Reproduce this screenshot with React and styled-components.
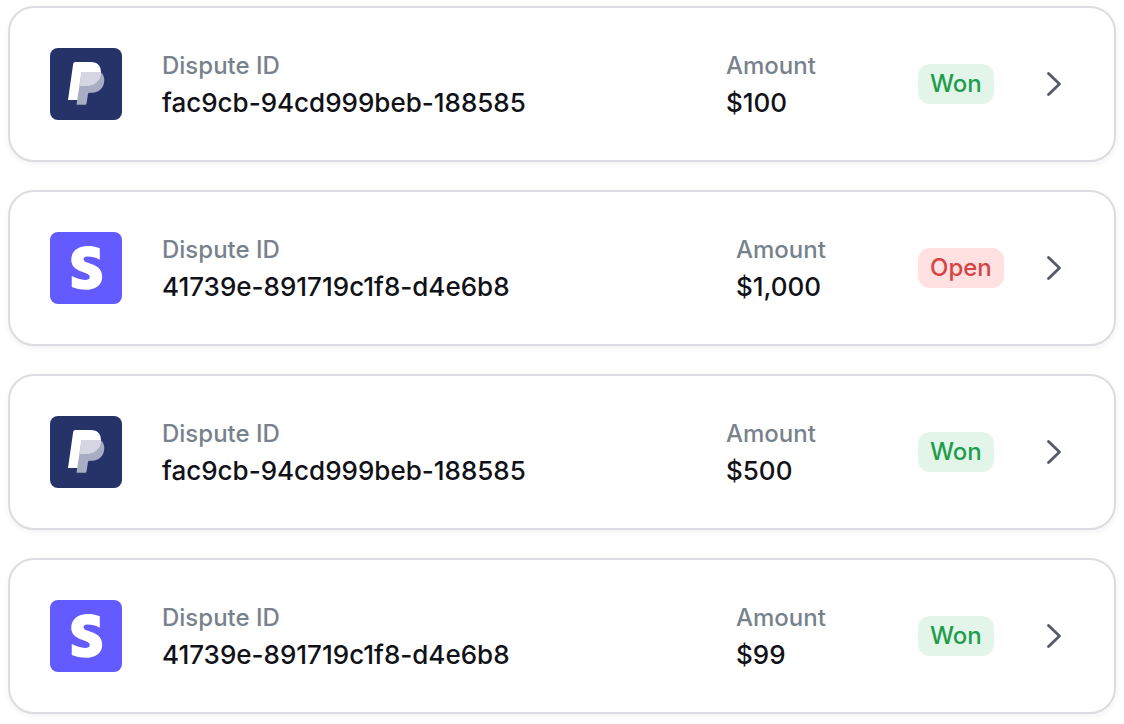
import styled, { createGlobalStyle } from 'styled-components';

const GlobalStyle = createGlobalStyle`
  * {
    box-sizing: border-box;
  }

  body {
    margin: 0;
    background-color: #ffffff;
    font-family: Inter, 'Liberation Sans', sans-serif;
  }
`;

const List = styled.ul`
  display: flex;
  flex-direction: column;
  gap: 28px;
  margin: 0;
  padding: 6px 8px 10px;
  list-style: none;
`;

const Card = styled.li`
  display: flex;
  align-items: center;
  padding: 38px 40px;
  background-color: #ffffff;
  border: 2px solid #dcdce2;
  border-radius: 26px;
  box-shadow: 0 2px 6px rgba(16, 24, 40, 0.06);
`;

const Logo = styled.svg`
  flex: none;
  width: 72px;
  height: 72px;
  margin-right: 40px;
  border-radius: 8px;
`;

const Field = styled.div`
  flex: 1;
  min-width: 0;
  padding-top: 2px;
`;

// Amount column is a little wider on PayPal rows
const AmountField = styled(Field)`
  flex: none;
  width: ${({ $wide }) => ($wide ? '192px' : '182px')};
`;

const Label = styled.div`
  color: #78828c;
  font-size: 24px;
  font-weight: 500;
  line-height: 36px;
`;

const Value = styled.div`
  color: #111217;
  font-size: 26px;
  font-weight: 500;
  line-height: 38px;
`;

const Status = styled.div`
  flex: none;
  width: 116px;
`;

const Badge = styled.span`
  display: inline-block;
  padding: 0 12px;
  border-radius: 12px;
  font-size: 24px;
  font-weight: 500;
  line-height: 40px;
  vertical-align: top;
  color: ${({ $open }) => ($open ? '#d64545' : '#1f9d4d')};
  background-color: ${({ $open }) => ($open ? '#ffe1e1' : '#e3f4e8')};
`;

const OpenButton = styled.button`
  display: flex;
  flex: none;
  padding: 0;
  border: none;
  background: none;
  cursor: pointer;
`;

const PayPalLogo = () => (
  <Logo viewBox="0 0 72 72" role="img" aria-label="PayPal">
    <rect width="72" height="72" fill="#253368" />
    <path
      fill="#ffffff"
      d="M25.2 14H41C47.5 14 51 17.8 51 24.5C51 33 44.5 38 36 38H32L28 52H18L23.2 15.7Q23.5 14 25.2 14Z"
    />
    <path
      fill="#a8adc3"
      d="M32.8 24H50.5C53 26 54.3 28.5 54.3 32C54.3 40 49 44.7 42 44.7H39.5Q38.3 44.7 38 46L36.5 55.5Q36.3 56.7 35 56.7H26.5L31.3 25.3Q31.5 24 32.8 24Z"
    />
    <path
      fill="#d4d6e1"
      d="M32.8 24H51V24.5C51 33 44.5 38 36 38H29.4L31.3 25.3Q31.5 24 32.8 24Z"
    />
  </Logo>
);

const StripeLogo = () => (
  <Logo viewBox="0 0 72 72" role="img" aria-label="Stripe">
    <rect width="72" height="72" fill="#635bff" />
    <path
      transform="translate(20.3 14) scale(0.0854)"
      fill="#ffffff"
      d="M155.3 154.6c0-22.3 18.6-30.9 48.4-30.9 43.4 0 98.5 13.3 141.9 36.7V26.1C298.3 7.2 251.1 0 203.8 0 88.1 0 11 60.4 11 161.4c0 157.9 216.8 132.3 216.8 200.4 0 26.4-22.9 34.9-54.7 34.9-47.2 0-108.2-19.5-156.1-45.5v128.5a396.09 396.09 0 0 0 156 32.4c118.6 0 200.3-51 200.3-153.2 0-170.2-218-139.7-218-203.8z"
    />
  </Logo>
);

const disputes = [
  { processor: 'paypal', id: 'fac9cb-94cd999beb-188585', amount: '$100', status: 'Won' },
  { processor: 'stripe', id: '41739e-891719c1f8-d4e6b8', amount: '$1,000', status: 'Open' },
  { processor: 'paypal', id: 'fac9cb-94cd999beb-188585', amount: '$500', status: 'Won' },
  { processor: 'stripe', id: '41739e-891719c1f8-d4e6b8', amount: '$99', status: 'Won' },
];

const DisputeCard = ({ processor, id, amount, status }) => (
  <Card>
    {processor === 'paypal' ? <PayPalLogo /> : <StripeLogo />}
    <Field>
      <Label>Dispute ID</Label>
      <Value>{id}</Value>
    </Field>
    <AmountField $wide={processor === 'paypal'}>
      <Label>Amount</Label>
      <Value>{amount}</Value>
    </AmountField>
    <Status>
      <Badge $open={status === 'Open'}>{status}</Badge>
    </Status>
    <OpenButton type="button" aria-label={`View dispute ${id}`}>
      <svg width="40" height="40" viewBox="0 0 40 40" fill="none">
        <path
          d="M14.5 9.5L25.5 20L14.5 30.5"
          stroke="#555a6b"
          strokeWidth="2.8"
          strokeLinecap="round"
          strokeLinejoin="round"
        />
      </svg>
    </OpenButton>
  </Card>
);

const App = () => {
  return (
    <>
      <GlobalStyle />
      <List>
        {disputes.map((dispute, index) => (
          <DisputeCard key={index} {...dispute} />
        ))}
      </List>
    </>
  );
};

export default App;
